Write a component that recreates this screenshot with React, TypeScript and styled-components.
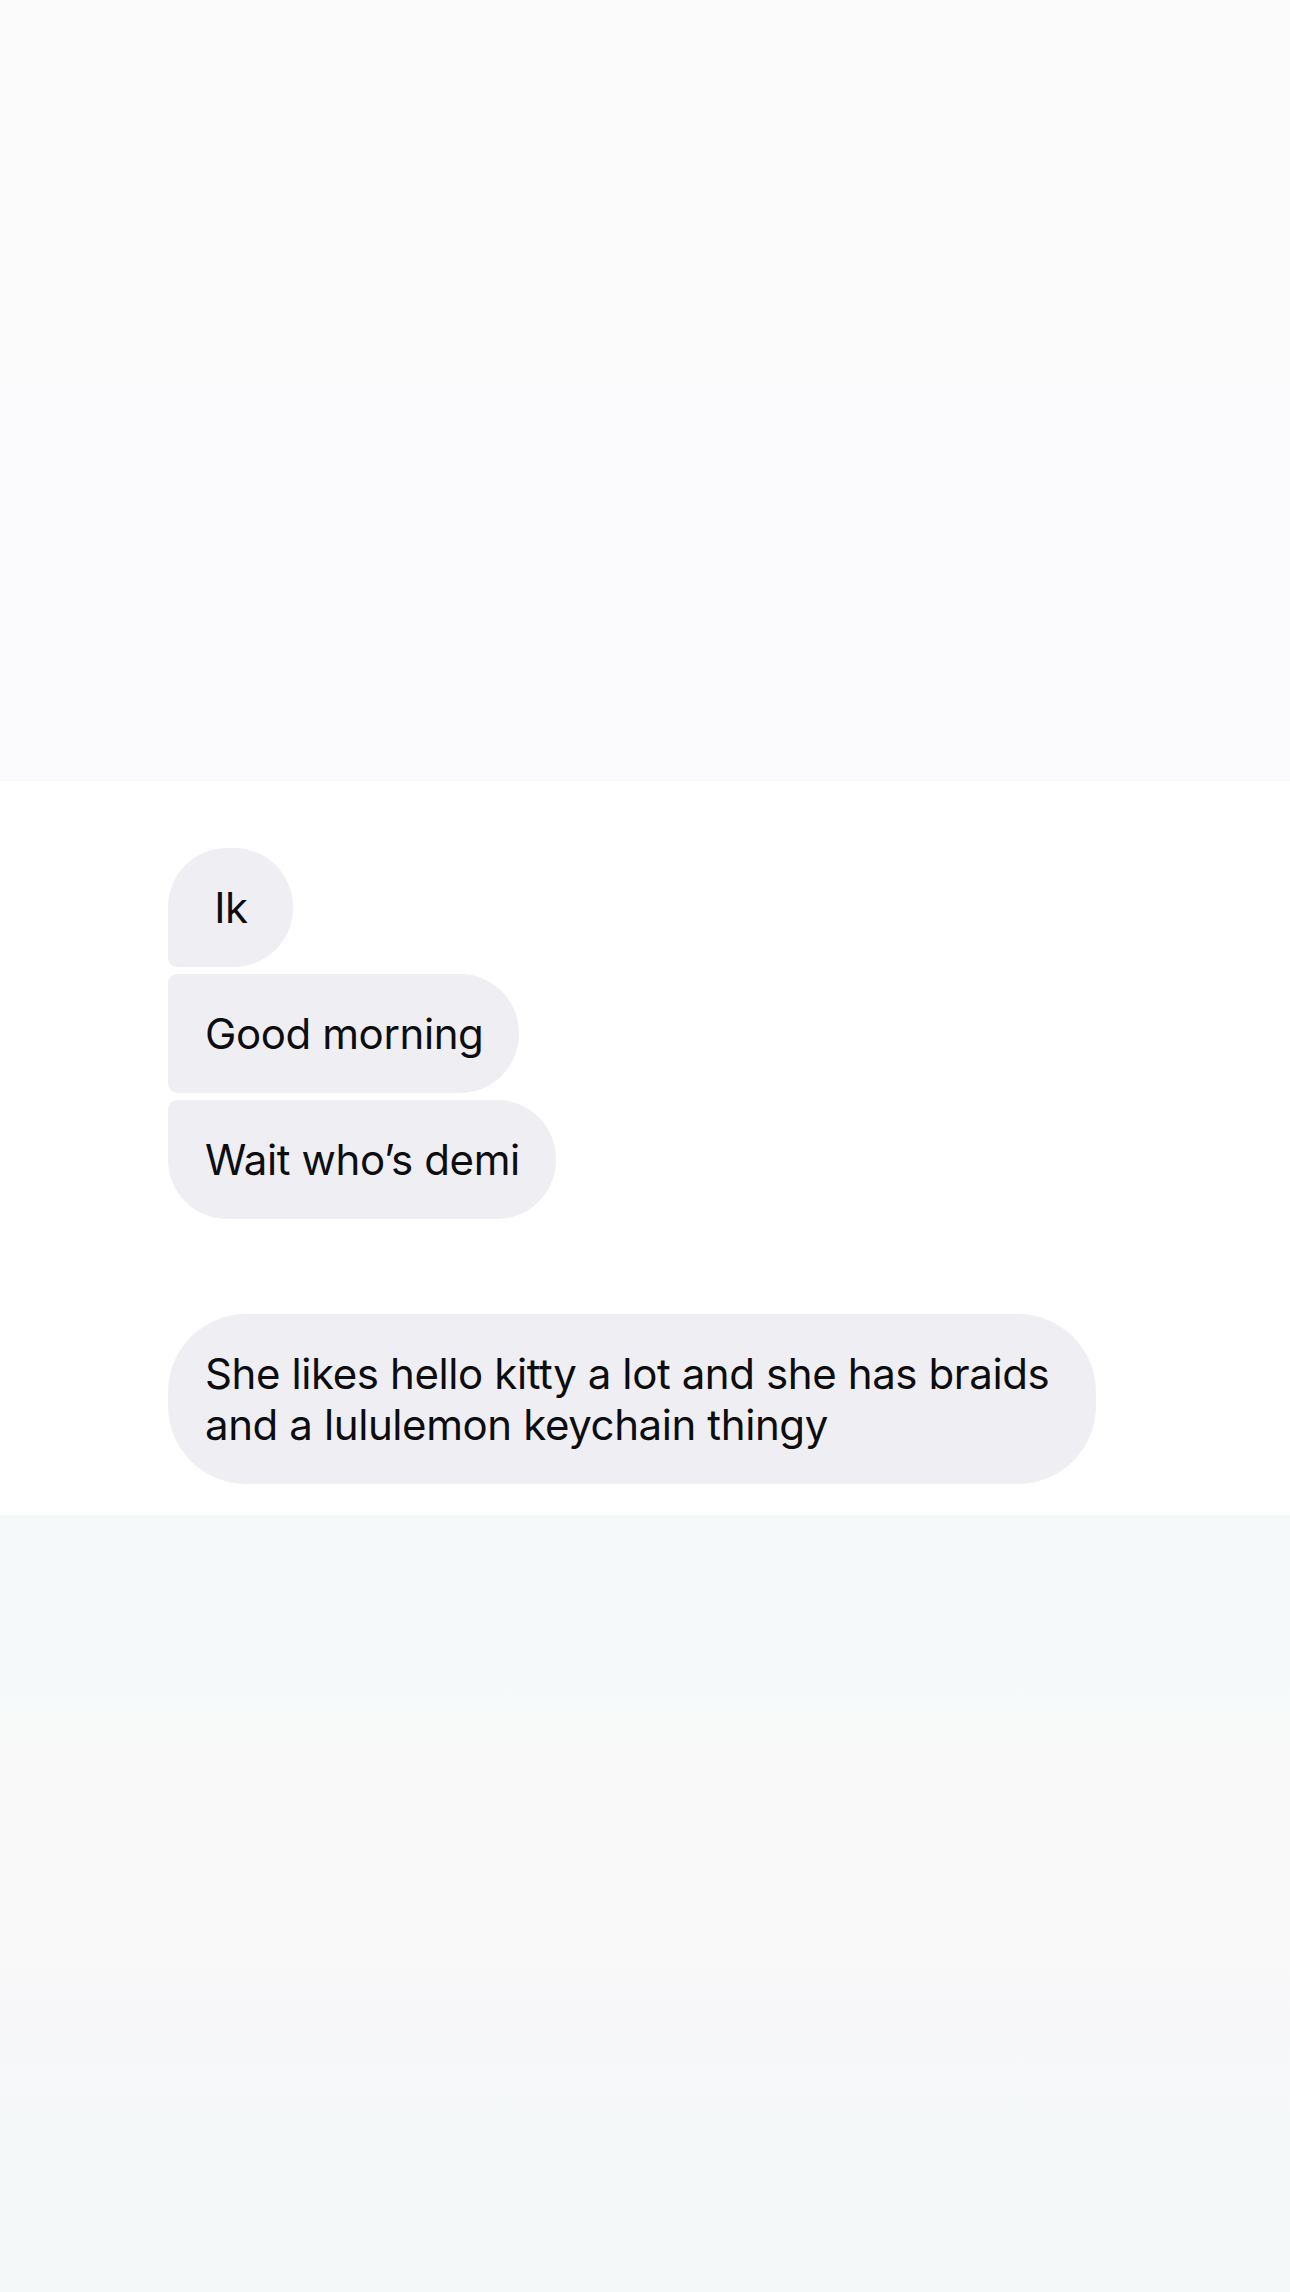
import React from 'react';
import styled, { createGlobalStyle } from 'styled-components';

const GlobalStyle = createGlobalStyle`
  html, body {
    margin: 0;
    padding: 0;
    background: #fbfbfb;
  }
  body {
    font-family: Inter, "Liberation Sans", sans-serif;
  }
`;

const Page = styled.div`
  width: 1290px;
  min-height: 2292px;
  display: flex;
  flex-direction: column;
`;

const Band = styled.div<{ $height: number; $bg: string }>`
  height: ${(p) => p.$height}px;
  background: ${(p) => p.$bg};
`;

const Chat = styled.div`
  background: #ffffff;
  padding: 67px 0 31px 168px;
  display: flex;
  flex-direction: column;
  align-items: flex-start;
`;

const Group = styled.div`
  display: flex;
  flex-direction: column;
  align-items: flex-start;
  gap: 7px;
  margin-bottom: 95px;
`;

type Corner = 'first' | 'middle' | 'last' | 'single';

const radii: Record<Corner, string> = {
  first: '59px 59px 59px 9px',
  middle: '9px 59px 59px 9px',
  last: '9px 59px 59px 59px',
  single: '78px',
};

const Bubble = styled.div<{ $corner: Corner; $wide?: boolean }>`
  box-sizing: border-box;
  min-width: 125px;
  width: ${(p) => (p.$wide ? '928px' : 'auto')};
  padding: 34px 36px 34px 37px;
  background: #efeff3;
  border-radius: ${(p) => radii[p.$corner]};
  color: #0d0d0f;
  font-size: 42px;
  line-height: 51px;
  letter-spacing: -0.4px;
  text-align: ${(p) => (p.$wide ? 'left' : 'center')};
`;

const Bottom = styled.div`
  flex: 1;
  background: linear-gradient(
    180deg,
    #f5f9fa 0%,
    #f6f9fa 22%,
    #f9f9f9 30%,
    #f9f9f9 55%,
    #f7f7f9 65%,
    #f5f8f9 78%,
    #f5f8f9 100%
  );
`;

const messages: { text: string; corner: Corner }[] = [
  { text: 'Ik', corner: 'first' },
  { text: 'Good morning', corner: 'middle' },
  { text: 'Wait who’s demi', corner: 'last' },
];

const App = () => {
  return (
    <>
      <GlobalStyle />
      <Page>
        <Band $height={378} $bg="#fbfbfb" />
        <Band $height={403} $bg="#fbfbfd" />
        <Chat>
          <Group>
            {messages.map((m, i) => (
              <Bubble key={i} $corner={m.corner}>
                {m.text}
              </Bubble>
            ))}
          </Group>
          <Bubble $corner="single" $wide>
            She likes hello kitty a lot and she has braids and a lululemon keychain thingy
          </Bubble>
        </Chat>
        <Bottom />
      </Page>
    </>
  );
};

export default App;
